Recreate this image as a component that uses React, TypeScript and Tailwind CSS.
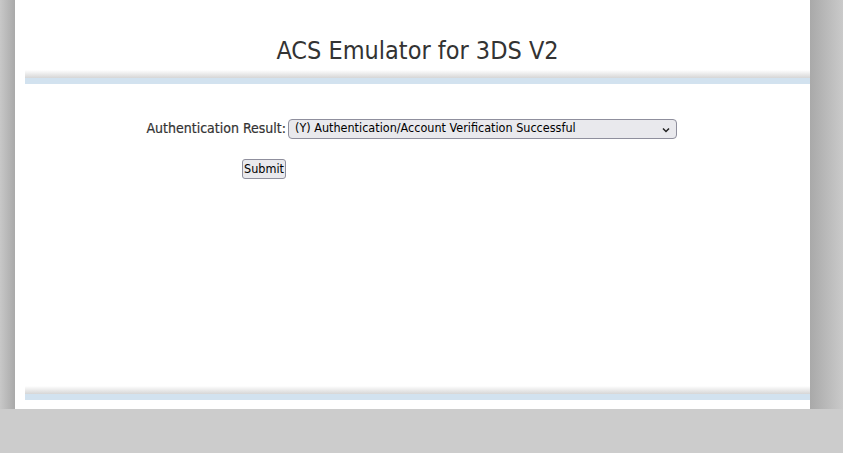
import React from "react";

function Bar() {
  return (
    <div className="w-full">
      <div className="h-[8px] bg-gradient-to-b from-[#ffffff] to-[#d6d6d6]" />
      <div className="h-[6px] bg-[#d2e2ef]" />
    </div>
  );
}

export default function App() {
  return (
    <div
      className="w-[843px] h-[453px] bg-[#cccccc] flex flex-col overflow-hidden"
      style={{ fontFamily: '"DejaVu Sans Condensed", "DejaVu Sans", sans-serif' }}
    >
      <div className="flex h-[409px]">
        <div className="w-[15px] bg-gradient-to-r from-[#c8c8c8] to-[#a9a9a9]" />
        <div className="w-[795px] bg-white pl-[10px] flex flex-col">
          <h1 className="pt-[36px] h-[70px] text-center text-[25px] leading-[30px] text-[#333333] font-normal">
            ACS Emulator for 3DS V2
          </h1>
          <Bar />
          <div className="pt-[34px] h-[302px]">
            <div className="flex items-center">
              <label className="w-[263px] text-right text-[14px] text-[#333333] pr-[2px] [-webkit-text-stroke:0.2px_#333333]">
                Authentication Result:
              </label>
              <div className="relative w-[389px] h-[20px] rounded-[4px] border border-[#8f8f9d] bg-[#e9e9ed] flex items-center pl-[6px]">
                <span className="text-[12.5px] text-black">
                  (Y) Authentication/Account Verification Successful
                </span>
                <svg
                  className="absolute right-[5px] top-[5px]"
                  width="10"
                  height="10"
                  viewBox="0 0 10 10"
                >
                  <path d="M2 3.5 L5 6.5 L8 3.5" stroke="#222" strokeWidth="1.5" fill="none" />
                </svg>
              </div>
            </div>
            <div className="pl-[217px] mt-[17px]">
              <button className="h-[20px] w-[44px] rounded-[3px] border border-[#8f8f9d] bg-[#e9e9ed] text-[12.5px] text-black leading-none">
                Submit
              </button>
            </div>
          </div>
          <Bar />
        </div>
        <div className="flex-1 bg-gradient-to-r from-[#a9a9a9] to-[#cacaca]" />
      </div>
    </div>
  );
}
